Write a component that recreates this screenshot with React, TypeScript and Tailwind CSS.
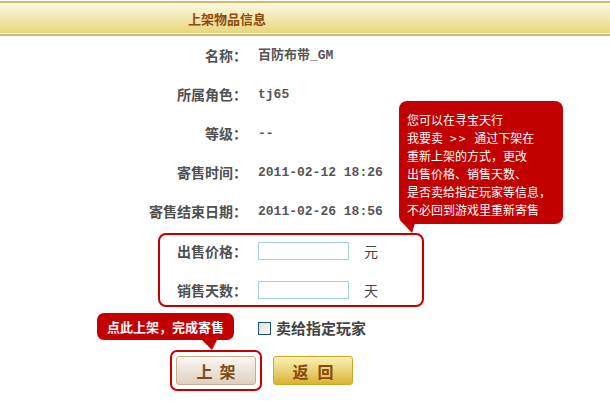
import React from 'react';

const cjk = { fontFamily: '"Noto Sans CJK SC", "Liberation Sans", sans-serif' };
const mono = { fontFamily: '"Liberation Mono", "Noto Sans CJK SC", monospace' };

const infoRows: { label: string; value: string }[] = [
    { label: '名称：', value: '百防布带_GM' },
    { label: '所属角色：', value: 'tj65' },
    { label: '等级：', value: '--' },
    { label: '寄售时间：', value: '2011-02-12 18:26' },
    { label: '寄售结束日期：', value: '2011-02-26 18:56' },
];

const tipLines = [
    '您可以在寻宝天行',
    '我要卖 >> 通过下架在',
    '重新上架的方式，更改',
    '出售价格、销售天数、',
    '是否卖给指定玩家等信息，',
    '不必回到游戏里重新寄售',
];

export default function App() {
    return (
        <div className="relative w-[610px] h-[407px] bg-white overflow-hidden" style={cjk}>
            {/* Header bar */}
            <div className="pt-px">
                <div className="border-t-2 border-[#d6b76e]">
                    <div className="h-[30px] bg-gradient-to-b from-[#fcf9e2] to-[#e8d67c] flex items-center pl-[188px]">
                        <span className="text-[13px] font-bold text-[#8a4b0a] leading-none">上架物品信息</span>
                    </div>
                    <div className="h-px bg-white" />
                    <div className="h-[2px] bg-[#d6b76e]" />
                </div>
            </div>

            {/* Item info rows */}
            <div className="flex flex-col">
                {infoRows.map((r) => (
                    <div key={r.label} className="h-[39px] flex items-center">
                        <div className="w-[247px] text-right text-[14px] font-bold text-[#505050]">{r.label}</div>
                        <div className="ml-[11px] text-[13px] font-bold text-[#555]" style={mono}>{r.value}</div>
                    </div>
                ))}
            </div>

            {/* Price / days box */}
            <div className="mt-[2px] ml-[158px] w-[266px] border-2 border-[#c40000] rounded-[8px] pt-[7px] pb-[6px] flex flex-col gap-[21px]">
                <div className="h-[18px] flex items-center">
                    <div className="w-[87px] text-right text-[14px] font-bold text-[#505050]">出售价格：</div>
                    <input className="ml-[11px] w-[91px] h-[18px] border border-[#a5cdec] outline-none" />
                    <span className="ml-[15px] text-[14px] text-[#444]">元</span>
                </div>
                <div className="h-[18px] flex items-center">
                    <div className="w-[87px] text-right text-[14px] font-bold text-[#505050]">销售天数：</div>
                    <input className="ml-[11px] w-[91px] h-[18px] border border-[#a5cdec] outline-none" />
                    <span className="ml-[15px] text-[14px] text-[#444]">天</span>
                </div>
            </div>

            {/* Designated player checkbox */}
            <div className="mt-[11px] h-[20px] flex items-center pl-[258px]">
                <span className="w-[13px] h-[13px] border border-[#1d4f7c] bg-gradient-to-br from-[#dcdcdc] to-white" />
                <span className="ml-[5px] text-[15px] text-[#444] font-bold">卖给指定玩家</span>
            </div>

            {/* Buttons */}
            <div className="mt-[12px] flex items-center pl-[170px] gap-[11px]">
                <div className="border-2 border-[#c40000] rounded-[7px] p-[4px]">
                    <button className="w-[80px] h-[29px] rounded-[3px] border border-[#c4ae94] bg-gradient-to-b from-[#faf7f2] to-[#ddd0be] flex items-center justify-center gap-[7px] text-[16px] font-bold text-[#7a4d14]">
                        <span>上</span>
                        <span>架</span>
                    </button>
                </div>
                <button className="w-[80px] h-[29px] rounded-[3px] border border-[#d3a81e] bg-gradient-to-b from-[#fbf1b4] to-[#d8b42a] flex items-center justify-center gap-[9px] text-[16px] font-bold text-[#8a4a0a]">
                    <span>返</span>
                    <span>回</span>
                </button>
            </div>

            {/* Tip callout: top right */}
            <div className="absolute left-[399px] top-[101px] w-[164px] h-[123px] bg-[#c20000] rounded-[8px] pl-[8px] pt-[10px] text-white text-[12px] leading-[18px]">
                {tipLines.map((l, i) =>
                    i === 1 ? (
                        <div key={l} className="flex">
                            <span>我要卖</span>
                            <span className="mx-[7px] tracking-[2px]">&gt;&gt;</span>
                            <span>通过下架在</span>
                        </div>
                    ) : (
                        <div key={l} className="whitespace-pre">{l}</div>
                    )
                )}
            </div>
            <svg className="absolute left-[398px] top-[220px]" width="22" height="16" viewBox="0 0 22 16">
                <polygon points="2,0 18,0 14,13" fill="#c20000" />
            </svg>

            {/* Tip callout: submit */}
            <div className="absolute left-[97px] top-[313px] w-[137px] h-[27px] bg-[#c20000] rounded-[7px] flex items-center pl-[10px] text-white text-[13px] font-bold">
                点此上架，完成寄售
            </div>
            <svg className="absolute left-[198px] top-[338px]" width="24" height="14" viewBox="0 0 24 14">
                <polygon points="2,0 20,0 14,12" fill="#c20000" />
            </svg>
        </div>
    );
}
